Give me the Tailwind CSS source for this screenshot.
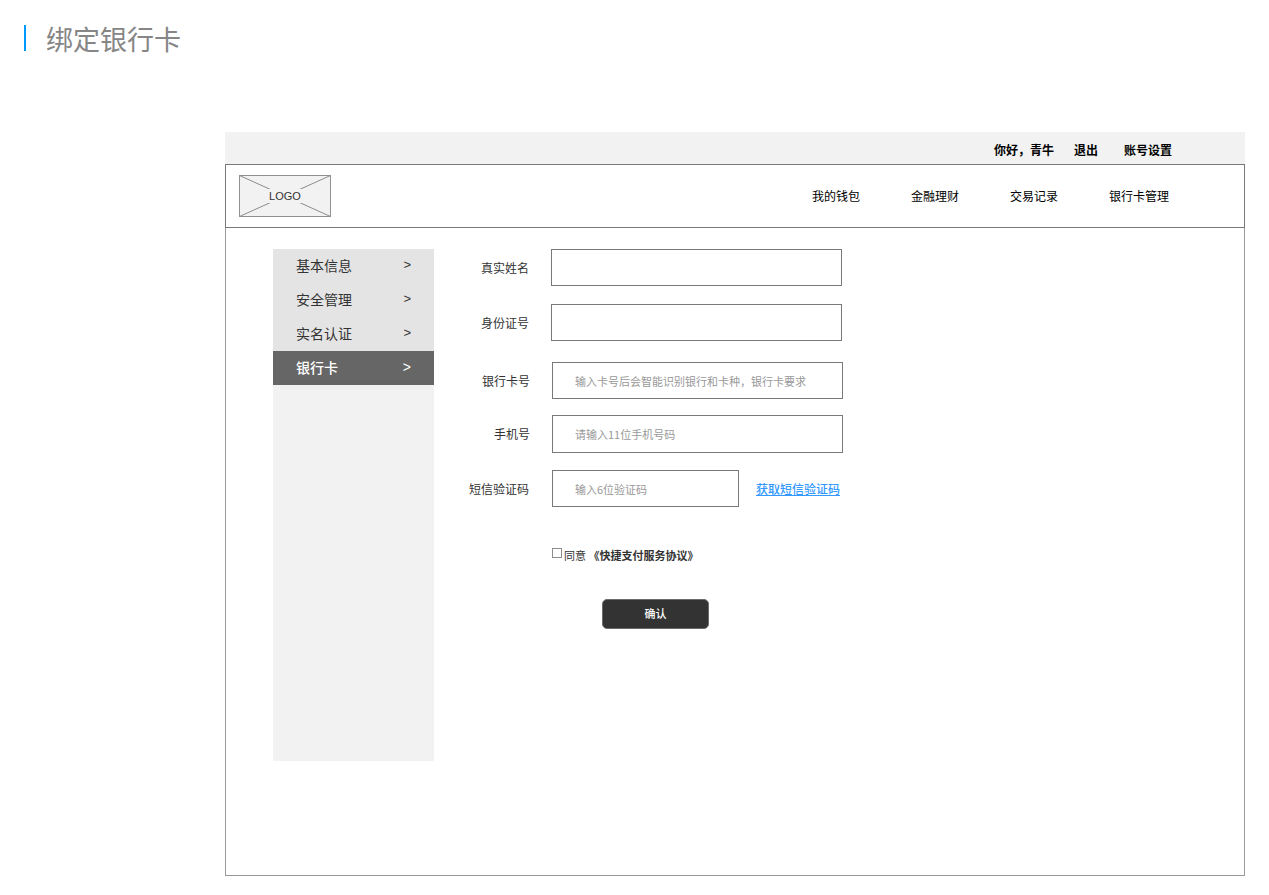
<!DOCTYPE html>
<html lang="zh-CN">
<head>
<meta charset="utf-8">
<meta name="viewport" content="width=device-width, initial-scale=1">
<title>绑定银行卡</title>
<script src="https://cdn.jsdelivr.net/npm/@tailwindcss/browser@4"></script>
</head>
<body class="bg-white pb-5 font-['Noto_Sans_CJK_SC',sans-serif] text-xs text-[#333333]">
  <header class="flex items-center gap-5 px-6 pt-[15px]">
    <span class="h-[26px] w-0.5 bg-[#0099ff]"></span>
    <h1 class="pt-0.5 text-[27px] leading-[43px] font-normal text-[#868686]">绑定银行卡</h1>
  </header>

  <div class="mt-18 mr-6 ml-[225px]">
    <div class="flex h-8 items-center justify-end bg-[#f2f2f2] pt-1 pr-[73px] font-bold text-black">
      <span>你好，青牛</span>
      <a href="#" class="ml-5">退出</a>
      <a href="#" class="ml-[26px]">账号设置</a>
    </div>

    <div class="flex items-center justify-between border border-[#797979] py-2.5 pr-[75px] pl-[13px]">
      <svg class="h-[42px] w-[92px]" viewBox="0 0 92 42" role="img" aria-label="LOGO">
        <rect x="0.5" y="0.5" width="91" height="41" fill="#f2f2f2" stroke="#919191"/>
        <path d="M.5 .5L91.5 41.5M.5 41.5L91.5 .5" stroke="#8c8c8c" fill="none"/>
        <rect x="29" y="14" width="34" height="14" fill="#f2f2f2"/>
        <text x="46" y="25" text-anchor="middle" class="fill-[#333333] font-['Liberation_Sans',sans-serif] text-[11px]">LOGO</text>
      </svg>
      <nav class="flex gap-[51px] text-black">
        <a href="#">我的钱包</a>
        <a href="#">金融理财</a>
        <a href="#">交易记录</a>
        <a href="#">银行卡管理</a>
      </nav>
    </div>

    <main class="flex items-start border-x border-b border-[#999999] pt-[21px] pb-[114px] pl-[47px]">
      <nav class="min-h-[512px] w-[161px] shrink-0 bg-[#f2f2f2] text-sm">
        <a href="#" class="flex h-[34px] items-center justify-between bg-[#e4e4e4] px-[23px] pb-0.5"><span>基本信息</span><span class="font-['Liberation_Sans',sans-serif] text-[13px]">&gt;</span></a>
        <a href="#" class="flex h-[34px] items-center justify-between bg-[#e4e4e4] px-[23px] pb-0.5"><span>安全管理</span><span class="font-['Liberation_Sans',sans-serif] text-[13px]">&gt;</span></a>
        <a href="#" class="flex h-[34px] items-center justify-between bg-[#e4e4e4] px-[23px] pb-0.5"><span>实名认证</span><span class="font-['Liberation_Sans',sans-serif] text-[13px]">&gt;</span></a>
        <a href="#" aria-current="page" class="flex h-[34px] items-center justify-between bg-[#666666] px-[23px] pb-0.5 font-medium text-white"><span>银行卡</span><span class="font-['Liberation_Sans',sans-serif]">&gt;</span></a>
      </nav>

      <form class="min-w-0 flex-1">
        <div class="flex items-center gap-[22px]">
          <label for="name" class="w-[95px] text-right">真实姓名</label>
          <input id="name" type="text" class="h-[37px] w-[291px] border border-[#797979] px-[22px] text-[11px]">
        </div>
        <div class="mt-[18px] flex items-center gap-[22px]">
          <label for="idno" class="w-[95px] text-right">身份证号</label>
          <input id="idno" type="text" class="h-[37px] w-[291px] border border-[#797979] px-[22px] text-[11px]">
        </div>
        <div class="mt-[21px] flex items-center gap-[22px]">
          <label for="card" class="w-24 text-right">银行卡号</label>
          <input id="card" type="text" placeholder="输入卡号后会智能识别银行和卡种，银行卡要求" class="h-[37px] w-[291px] border border-[#797979] px-[22px] text-[11px] placeholder:text-[#999999]">
        </div>
        <div class="mt-4 flex items-center gap-[22px]">
          <label for="phone" class="w-24 text-right">手机号</label>
          <input id="phone" type="text" placeholder="请输入11位手机号码" class="h-[38px] w-[291px] border border-[#797979] px-[22px] text-[11px] placeholder:text-[#999999]">
        </div>
        <div class="mt-[17px] flex items-center gap-[23px]">
          <label for="code" class="w-[95px] text-right">短信验证码</label>
          <div class="flex items-center gap-[17px]">
            <input id="code" type="text" placeholder="输入6位验证码" class="h-[37px] w-[187px] border border-[#797979] px-[22px] text-[11px] placeholder:text-[#999999]">
            <a href="#" class="font-medium text-[#3399ff] underline">获取短信验证码</a>
          </div>
        </div>
        <div class="mt-10 ml-[118px] flex items-start gap-0.5 text-[11px] leading-4">
          <input id="agree" type="checkbox" class="mt-px size-2.5 appearance-none border border-[#8c8c8c] bg-white checked:bg-[#333333]">
          <label for="agree">同意 <a href="#" class="font-bold">《快捷支付服务协议》</a></label>
        </div>
        <button type="submit" class="mt-9 ml-[168px] h-[30px] w-[107px] rounded-[5px] border border-[#6b6b6b] bg-[#333333] pb-0.5 text-[11px] font-medium text-white">确认</button>
      </form>
    </main>
  </div>
</body>
</html>
